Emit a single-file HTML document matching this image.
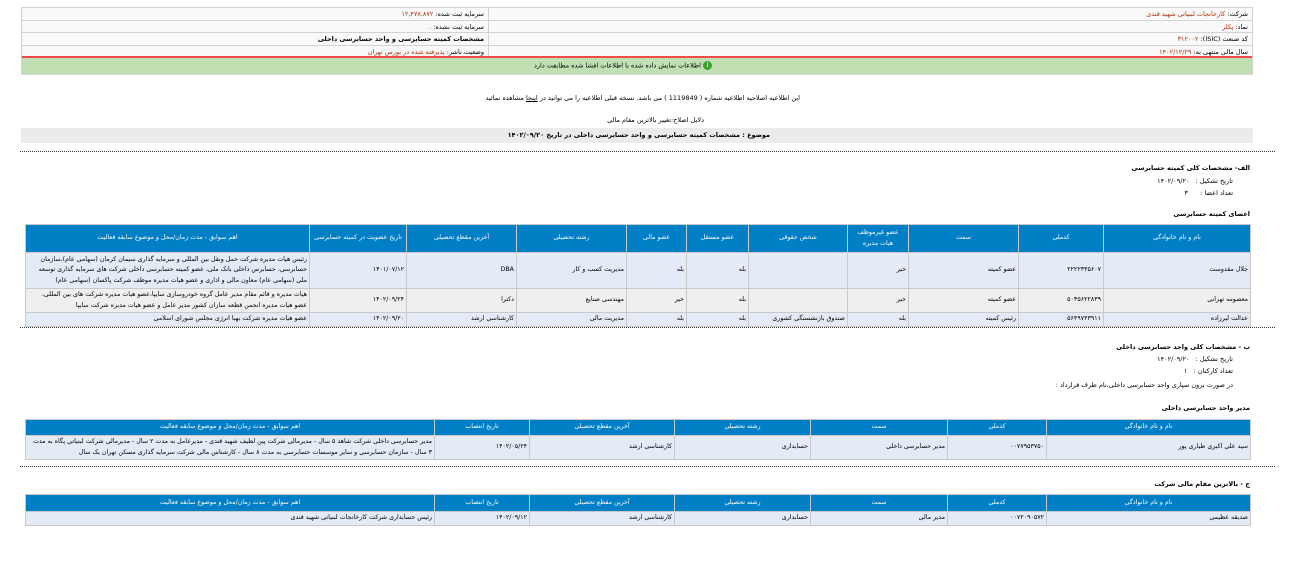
<!DOCTYPE html>
<html><head><meta charset="utf-8">
<style>
*{margin:0;padding:0;box-sizing:border-box}
body{width:1290px;height:563px;background:#fff;position:relative;overflow:hidden;font-family:"DejaVu Sans","Liberation Sans",sans-serif;font-size:6.5px;color:#000;direction:rtl}
.a{position:absolute;white-space:nowrap}
.hdr{position:absolute;left:21px;top:7px;width:1232px;border:1px solid #d2d2d2;background:#f9f9f9}
.hdr .r{height:12.5px;border-bottom:1px solid #d2d2d2;position:relative}
.hdr .c{position:absolute;top:2px}
.br{color:#b4330a}
.dot{position:absolute;left:20px;width:1255px;border-top:1.5px dotted #333}
table{position:absolute;border-collapse:collapse;direction:rtl;table-layout:fixed}
td,th{border:1px solid #c9c9c9;font-weight:normal;padding:1px 2px;font-size:6.3px;line-height:10.5px;overflow:hidden}
th{background:#007ec6;color:#fff;text-align:center}
td{background:#e4ebf6;text-align:right;vertical-align:middle}
tr.g td{background:#efefef}
b{font-weight:bold}
</style></head><body>

<div class="hdr">
 <div class="r"><span class="c" style="right:4px">شرکت: <span class="br">کارخانجات لبنیاتی شهید قندی</span></span><span class="c" style="right:768px">سرمایه ثبت شده: <span class="br">۱۲,۴۷۸,۸۷۲</span></span><div style="position:absolute;left:466px;top:0;bottom:0;border-left:1px solid #d2d2d2"></div></div>
 <div class="r"><span class="c" style="right:4px">نماد: <span class="br">پکلر</span></span><span class="c" style="right:768px">سرمایه ثبت نشده: <span class="br">.</span></span><div style="position:absolute;left:466px;top:0;bottom:0;border-left:1px solid #d2d2d2"></div></div>
 <div class="r"><span class="c" style="right:4px">کد صنعت (ISIC): <span class="br">۳۱۲۰۰۲</span></span><span class="c" style="right:768px"><b>مشخصات کمیته حسابرسی و واحد حسابرسی داخلی</b></span><div style="position:absolute;left:466px;top:0;bottom:0;border-left:1px solid #d2d2d2"></div></div>
 <div class="r" style="border-bottom:2px solid #ef4a4a"><span class="c" style="right:4px">سال مالی منتهی به: <span class="br">۱۴۰۲/۱۲/۲۹</span></span><span class="c" style="right:768px">وضعیت ناشر: <span class="br">پذیرفته شده در بورس تهران</span></span><div style="position:absolute;left:466px;top:0;bottom:0;border-left:1px solid #d2d2d2"></div></div>
 <div style="height:16px;background:#c0e0b4;position:relative"><span class="c" style="right:540px;top:3px"><span style="display:inline-block;width:9px;height:9px;border-radius:50%;background:#3da12b;color:#fff;font-size:7px;text-align:center;line-height:9px;vertical-align:middle">i</span> اطلاعات نمایش داده شده با اطلاعات افشا شده مطابقت دارد</span></div>
</div>

<div class="a" style="right:490px;top:94px">این اطلاعیه اصلاحیه اطلاعیه شماره ( 1119849 ) می باشد. نسخه قبلی اطلاعیه را می توانید در <u>اینجا</u> مشاهده نمائید</div>
<div class="a" style="right:586px;top:116px">دلایل اصلاح:تغییر بالاترین مقام مالی</div>
<div class="a" style="left:21px;top:128px;width:1232px;height:15px;background:#ebebeb"></div>
<div class="a" style="right:520px;top:131px;font-weight:bold">موضوع : مشخصات کمیته حسابرسی و واحد حسابرسی داخلی در تاریخ ۱۴۰۲/۰۹/۲۰</div>
<div class="dot" style="top:151px"></div>

<div class="a" style="right:40px;top:164px;font-weight:bold">الف- مشخصات کلی کمیته حسابرسی</div>
<div class="a" style="right:57px;top:177px">تاریخ تشکیل : &nbsp; ۱۴۰۲/۰۹/۲۰</div>
<div class="a" style="right:57px;top:189px">تعداد اعضا : &nbsp;&nbsp; &nbsp; ۳</div>
<div class="a" style="right:40px;top:210px;font-weight:bold">اعضای کمیته حسابرسی</div>

<table style="left:25px;top:224px;width:1225px">
<colgroup><col style="width:147px"><col style="width:85px"><col style="width:110px"><col style="width:61px"><col style="width:99px"><col style="width:62px"><col style="width:60px"><col style="width:110px"><col style="width:110px"><col style="width:97px"><col style="width:284px"></colgroup>
<tr style="height:28px"><th>نام و نام خانوادگی</th><th>کدملی</th><th>سمت</th><th>عضو غیرموظف هیات مدیره</th><th>شخص حقوقی</th><th>عضو مستقل</th><th>عضو مالی</th><th>رشته تحصیلی</th><th>آخرین مقطع تحصیلی</th><th>تاریخ عضویت در کمیته حسابرسی</th><th>اهم سوابق - مدت زمان/محل و موضوع سابقه فعالیت</th></tr>
<tr style="height:36px"><td>جلال مقدوست</td><td>۲۲۲۲۳۴۵۶۰۷</td><td>عضو کمیته</td><td>خیر</td><td></td><td>بله</td><td>بله</td><td>مدیریت کسب و کار</td><td>DBA</td><td>۱۴۰۱/۰۷/۱۲</td><td style="white-space:normal">رئیس هیات مدیره شرکت حمل ونقل بین المللی و سرمایه گذاری سیمان کرمان (سهامی عام)،سازمان حسابرسی، حسابرس داخلی بانک ملی، عضو کمیته حسابرسی داخلی شرکت های سرمایه گذاری توسعه ملی (سهامی عام) معاون مالی و اداری و عضو هیات مدیره موظف شرکت پاکسان (سهامی عام)</td></tr>
<tr class="g" style="height:21px"><td>معصومه تهرانی</td><td>۵۰۳۵۶۲۲۸۳۹</td><td>عضو کمیته</td><td>خیر</td><td></td><td>بله</td><td>خیر</td><td>مهندسی صنایع</td><td>دکترا</td><td>۱۴۰۲/۰۹/۲۴</td><td style="white-space:normal">هیات مدیره و قائم مقام مدیر عامل گروه خودروسازی سایپا،عضو هیات مدیره شرکت های بین المللی، عضو هیات مدیره انجمن قطعه سازان کشور مدیر عامل و عضو هیات مدیره شرکت سایپا</td></tr>
<tr style="height:13px"><td>عدالت لیرزاده</td><td>۵۶۴۹۷۴۳۹۱۱</td><td>رئیس کمیته</td><td>بله</td><td>صندوق بازنشستگی کشوری</td><td>بله</td><td>بله</td><td>مدیریت مالی</td><td>کارشناسی ارشد</td><td>۱۴۰۲/۰۹/۲۰</td><td>عضو هیات مدیره شرکت بهبا انرژی مجلس شورای اسلامی</td></tr>
</table>

<div class="dot" style="top:327px"></div>
<div class="a" style="right:40px;top:343px;font-weight:bold">ب - مشخصات کلی واحد حسابرسی داخلی</div>
<div class="a" style="right:57px;top:355px">تاریخ تشکیل : &nbsp; ۱۴۰۲/۰۹/۲۰</div>
<div class="a" style="right:57px;top:367px">تعداد کارکنان : &nbsp; ۱</div>
<div class="a" style="right:57px;top:381px">در صورت برون سپاری واحد حسابرسی داخلی،نام طرف قرارداد :</div>
<div class="a" style="right:40px;top:404px;font-weight:bold">مدیر واحد حسابرسی داخلی</div>

<table style="left:25px;top:419px;width:1225px">
<colgroup><col style="width:204px"><col style="width:99px"><col style="width:137px"><col style="width:136px"><col style="width:145px"><col style="width:95px"><col style="width:409px"></colgroup>
<tr style="height:16px"><th>نام و نام خانوادگی</th><th>کدملی</th><th>سمت</th><th>رشته تحصیلی</th><th>آخرین مقطع تحصیلی</th><th>تاریخ انتصاب</th><th>اهم سوابق - مدت زمان/محل و موضوع سابقه فعالیت</th></tr>
<tr style="height:22px"><td>سید علی اکبری طیاری پور</td><td>۰۰۷۷۹۵۳۷۵۰</td><td>مدیر حسابرسی داخلی</td><td>حسابداری</td><td>کارشناسی ارشد</td><td>۱۴۰۲/۰۵/۲۴</td><td style="white-space:normal">مدیر حسابرسی داخلی شرکت شاهد ۵ سال - مدیرمالی شرکت پین لطیف شهید قندی - مدیرعامل به مدت ۲ سال - مدیرمالی شرکت لبنیاتی پگاه به مدت ۳ سال - سازمان حسابرسی و سایر موسسات حسابرسی به مدت ۸ سال - کارشناس مالی شرکت سرمایه گذاری مسکن تهران یک سال</td></tr>
</table>

<div class="dot" style="top:466px"></div>
<div class="a" style="right:40px;top:480px;font-weight:bold">ج - بالاترین مقام مالی شرکت</div>

<table style="left:25px;top:494px;width:1225px">
<colgroup><col style="width:204px"><col style="width:99px"><col style="width:137px"><col style="width:136px"><col style="width:145px"><col style="width:95px"><col style="width:409px"></colgroup>
<tr style="height:17px"><th>نام و نام خانوادگی</th><th>کدملی</th><th>سمت</th><th>رشته تحصیلی</th><th>آخرین مقطع تحصیلی</th><th>تاریخ انتصاب</th><th>اهم سوابق - مدت زمان/محل و موضوع سابقه فعالیت</th></tr>
<tr style="height:13px"><td>صدیقه عظیمی</td><td>۰۰۷۲۰۹۰۵۷۲</td><td>مدیر مالی</td><td>حسابداری</td><td>کارشناسی ارشد</td><td>۱۴۰۲/۰۹/۱۲</td><td>رئیس حسابداری شرکت کارخانجات لبنیاتی شهید قندی</td></tr>
</table>
</body></html>
